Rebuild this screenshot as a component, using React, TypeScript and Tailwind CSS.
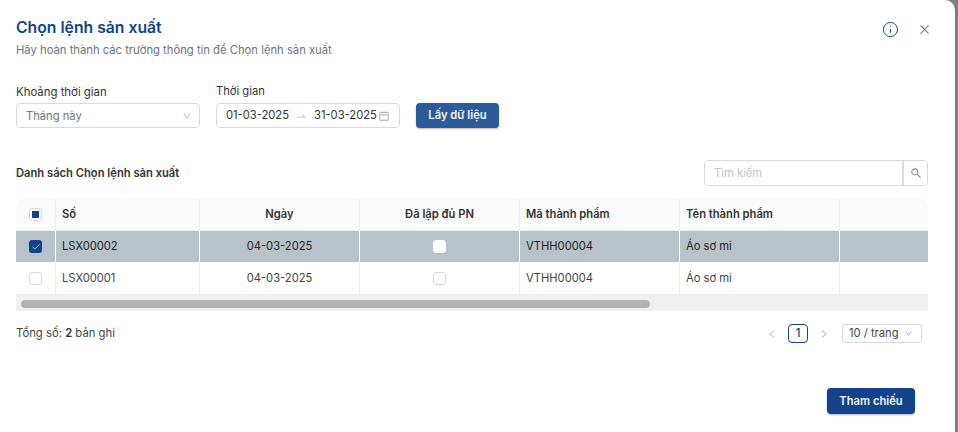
import { Check, Info } from 'lucide-react';
import { AiOutlineCalendar, AiOutlineClose, AiOutlineDown, AiOutlineLeft, AiOutlineRight, AiOutlineSearch, AiOutlineSwapRight } from 'react-icons/ai';

const rows = [
  { so: 'LSX00002', ngay: '04-03-2025', ma: 'VTHH00004', ten: 'Áo sơ mi', selected: true },
  { so: 'LSX00001', ngay: '04-03-2025', ma: 'VTHH00004', ten: 'Áo sơ mi', selected: false },
];

const gridCols = 'grid grid-cols-[40px_144px_160px_160px_160px_160px_88px]';

export default function App() {
  return (
    <div className="h-[432px] w-[958px] overflow-hidden bg-[#7f7f7f] font-['Inter',sans-serif] text-[11.2px] text-[#333333]">
      <div className="h-[432px] w-[955px] rounded-tr-[10px] bg-white pl-4 pr-[27px] pt-[18px]">
        {/* Header */}
        <div className="flex items-start justify-between">
          <div>
            <h1 className="text-[15.75px] leading-[20px] font-semibold text-[#12438a]">Chọn lệnh sản xuất</h1>
            <p className="mt-[4px] text-[11.25px] leading-[16px] text-[#6b7280]">
              Hãy hoàn thành các trường thông tin để Chọn lệnh sản xuất
            </p>
          </div>
          <div className="mt-[3px] mr-[-3px] flex items-center gap-[19px]">
            <Info size={17} strokeWidth={1.4} className="text-[#12438a]" />
            <AiOutlineClose size={13} className="text-[#777777]" />
          </div>
        </div>

        {/* Filters */}
        <div className="mt-[25px] flex items-end gap-4">
          <div className="w-[184px]">
            <div className="mb-[3px] text-[11.4px] leading-[16px] text-[#333333]">Khoảng thời gian</div>
            <div className="flex h-[25px] items-center justify-between rounded-[4px] border border-[#d9d9d9] pt-[1px] pr-[7px] pl-[9px] text-[#6f7680]">
              <span>Tháng này</span>
              <AiOutlineDown size={10} className="text-[#aaaaaa]" />
            </div>
          </div>
          <div className="w-[184px]">
            <div className="mb-[4px] leading-[16px] text-[#333333]">Thời gian</div>
            <div className="flex h-[25px] items-center rounded-[4px] border border-[#d9d9d9] pr-[9px] pl-[9px] text-[#333333]">
              <span className="whitespace-nowrap">01-03-2025</span>
              <AiOutlineSwapRight size={12} className="ml-[6px] shrink-0 text-[#b5b5b5]" />
              <span className="ml-[7px] whitespace-nowrap">31-03-2025</span>
              <AiOutlineCalendar size={12} className="ml-auto shrink-0 text-[#aaaaaa]" />
            </div>
          </div>
          <button className="h-[25px] w-[83px] rounded-[4px] bg-[#2c5b97] font-semibold text-[#f3f6fa] shadow-[0_1px_2px_rgba(0,0,0,0.3)]">
            Lấy dữ liệu
          </button>
        </div>

        {/* Table title and search */}
        <div className="mt-[32px] flex items-center justify-between">
          <div className="leading-[16px] font-semibold text-[#333333]">Danh sách Chọn lệnh sản xuất</div>
          <div className="flex h-[26px] w-[224px] rounded-[4px] border border-[#d9d9d9]">
            <div className="flex-1 pl-[9px] leading-[24px] text-[#c4c4c4]">Tìm kiếm</div>
            <div className="flex w-[25px] items-center justify-center border-l-2 border-[#dddddd]">
              <AiOutlineSearch size={12} className="text-[#777777]" />
            </div>
          </div>
        </div>

        {/* Table */}
        <div className="mt-[13px] overflow-hidden rounded-t-[6px]">
          <div className={`${gridCols} h-[32px] border-b border-[#eeeeee] bg-[#fafafa] font-semibold text-[#333333]`}>
            <div className="flex items-center justify-center border-r border-[#eeeeee]">
              <div className="flex h-[13px] w-[13px] items-center justify-center rounded-[3px] border border-[#d9d9d9] bg-white">
                <div className="h-[7px] w-[7px] bg-[#12438a]" />
              </div>
            </div>
            <div className="flex items-center border-r border-[#eeeeee] pl-[6px]">Số</div>
            <div className="flex items-center justify-center border-r border-[#eeeeee]">Ngày</div>
            <div className="flex items-center justify-center border-r border-[#eeeeee]">Đã lập đủ PN</div>
            <div className="flex items-center border-r border-[#eeeeee] pl-[6px]">Mã thành phẩm</div>
            <div className="flex items-center border-r border-[#eeeeee] pl-[6px]">Tên thành phẩm</div>
            <div />
          </div>
          {rows.map((row) => (
            <div
              key={row.so}
              className={`${gridCols} h-[32px] border-b ${row.selected ? 'border-white bg-[#b8c2c9] text-[#222222]' : 'border-[#eeeeee] bg-white text-[#444444]'}`}
            >
              <div className={`flex items-center justify-center border-r ${row.selected ? 'border-white' : 'border-[#eeeeee]'}`}>
                {row.selected ? (
                  <div className="flex h-[13px] w-[13px] items-center justify-center rounded-[3px] bg-[#12438a]">
                    <Check size={10} strokeWidth={1.5} className="text-white" />
                  </div>
                ) : (
                  <div className="h-[13px] w-[13px] rounded-[3px] border border-[#d9d9d9] bg-white" />
                )}
              </div>
              <div className={`flex items-center border-r pl-[6px] ${row.selected ? 'border-white' : 'border-[#eeeeee]'}`}>{row.so}</div>
              <div className={`flex items-center justify-center border-r ${row.selected ? 'border-white' : 'border-[#eeeeee]'}`}>{row.ngay}</div>
              <div className={`flex items-center justify-center border-r ${row.selected ? 'border-white' : 'border-[#eeeeee]'}`}>
                <div className={`h-[13px] w-[13px] rounded-[3px] border bg-white ${row.selected ? 'border-white' : 'border-[#d9d9d9]'}`} />
              </div>
              <div className={`flex items-center border-r pl-[6px] ${row.selected ? 'border-white' : 'border-[#eeeeee]'}`}>{row.ma}</div>
              <div className={`flex items-center border-r pl-[6px] ${row.selected ? 'border-white' : 'border-[#eeeeee]'}`}>{row.ten}</div>
              <div />
            </div>
          ))}
          {/* Scrollbar */}
          <div className="h-[16px] bg-[#f0f0f0] pt-[5px] pl-[5px]">
            <div className="h-[8px] w-[629px] rounded-full bg-[#b3b3b3]" />
          </div>
        </div>

        {/* Footer */}
        <div className="mt-[13px] flex items-center justify-between">
          <div className="text-[11.3px] text-[#444444]">
            Tổng số: <span className="font-semibold text-[#333333]">2</span> bản ghi
          </div>
          <div className="mr-[6px] flex items-center">
            <AiOutlineLeft size={10} className="mx-[1px] text-[#bbbbbb]" />
            <div className="mx-[10px] flex h-[19px] w-[20px] items-center justify-center rounded-[4px] border border-[#12438a] font-medium text-[#12438a]">
              1
            </div>
            <AiOutlineRight size={10} className="mx-[1px] text-[#aaaaaa]" />
            <div className="ml-[12px] flex h-[19px] w-[80px] items-center justify-between rounded-[3px] border border-[#d9d9d9] pr-[8px] pl-[6px] text-[#444444]">
              <span>10 / trang</span>
              <AiOutlineDown size={9} className="text-[#aaaaaa]" />
            </div>
          </div>
        </div>

        <div className="mt-[45px] flex justify-end pr-[13px]">
          <button className="h-[26px] w-[88px] rounded-[4px] bg-[#12438a] font-semibold text-[#f3f6fa] shadow-[0_1px_2px_rgba(0,0,0,0.3)]">
            Tham chiếu
          </button>
        </div>
      </div>
    </div>
  );
}
